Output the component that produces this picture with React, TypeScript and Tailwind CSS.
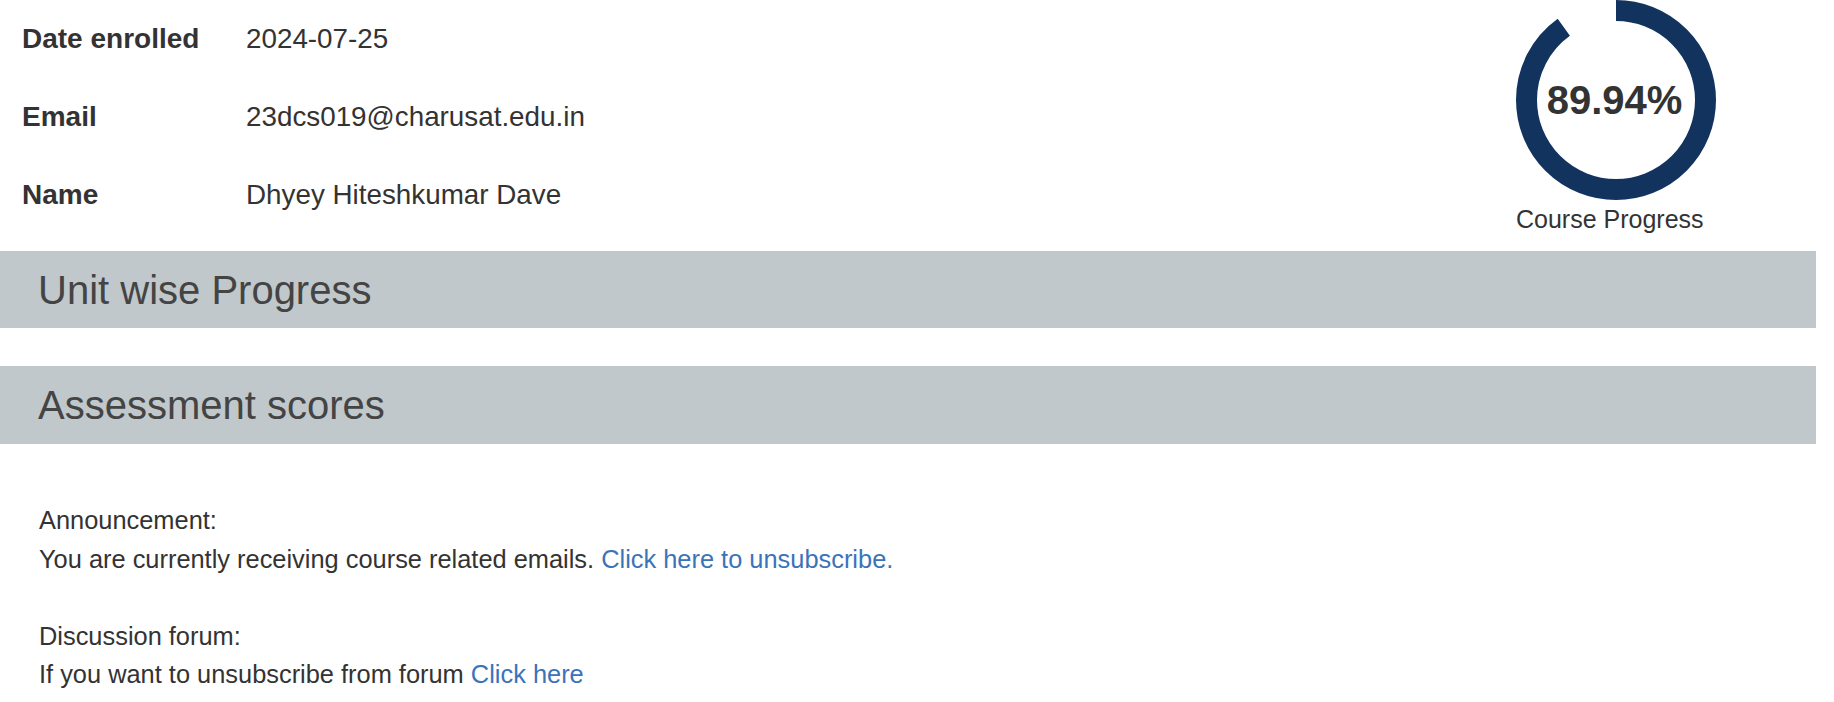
export default function App() {
  const pct = 89.94;
  const r = 89.5;
  const c = 2 * Math.PI * r;
  const rows: [string, string][] = [
    ["Date enrolled", "2024-07-25"],
    ["Email", "23dcs019@charusat.edu.in"],
    ["Name", "Dhyey Hiteshkumar Dave"],
  ];
  return (
    <div className="w-[1816px] bg-white font-['Liberation_Sans',Arial,sans-serif] text-[#333]">
      <div className="flex items-start justify-between pr-[100px]">
        <div className="flex flex-col pl-[22px]">
          {rows.map(([k, v]) => (
            <div key={k} className="flex h-[78px] items-center text-[28px] leading-[42px]">
              <div className="w-[224px] font-bold">{k}</div>
              <div className="text-[27.8px]">{v}</div>
            </div>
          ))}
        </div>
        <div className="flex w-[200px] flex-col">
          <div className="relative h-[200px] w-[200px]">
            <svg width="200" height="200" viewBox="0 0 200 200">
              <circle
                cx="100"
                cy="100"
                r={r}
                fill="none"
                stroke="#13335f"
                strokeWidth="21"
                strokeDasharray={`${(c * pct) / 100} ${c}`}
                transform="rotate(-90 100 100)"
              />
            </svg>
            <div className="absolute inset-0 flex items-center justify-center pr-[3px] text-[40px] font-bold leading-none text-[#333]">
              89.94%
            </div>
          </div>
          <div className="mt-[2px] whitespace-nowrap text-[25px] leading-[34px] text-[#333]">Course Progress</div>
        </div>
      </div>
      <div className="mt-[15px] flex h-[77px] items-center bg-[#c0c8cb] pl-[38px] text-[40px] leading-[44px] text-[#444]">
        Unit wise Progress
      </div>
      <div className="mt-[38px] flex h-[78px] items-center bg-[#c0c8cb] pl-[38px] text-[40px] leading-[44px] text-[#444]">
        Assessment scores
      </div>
      <div className="pl-[39px] pt-[57px] text-[25.4px] leading-[38.5px] text-[#333]">
        <div>Announcement:</div>
        <div>
          You are currently receiving course related emails.{" "}
          <a className="text-[#3b73b9]" href="#">Click here to unsubscribe.</a>
        </div>
        <div className="h-[38.5px]" />
        <div>Discussion forum:</div>
        <div>
          If you want to unsubscribe from forum{" "}
          <a className="text-[#3b73b9]" href="#">Click here</a>
        </div>
      </div>
    </div>
  );
}
